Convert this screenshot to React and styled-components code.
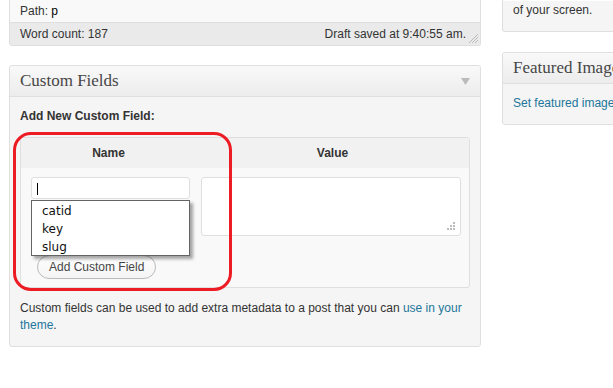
import React from 'react';
import styled, { createGlobalStyle } from 'styled-components';

const GlobalStyle = createGlobalStyle`
  html, body {
    margin: 0;
    padding: 0;
    background: #fff;
    overflow: hidden;
  }
  body {
    font-family: "Liberation Sans", Arial, sans-serif;
    font-size: 12px;
    color: #333;
  }
`;

const Page = styled.div`
  display: flex;
  align-items: flex-start;
  gap: 21px;
  padding-left: 9px;
  width: 900px;
`;

const MainColumn = styled.div`
  width: 472px;
  flex: none;
`;

const SideColumn = styled.div`
  width: 280px;
  flex: none;
`;

const StatusBox = styled.div`
  border: 1px solid #dfdfdf;
  border-top: none;
  border-radius: 0 0 3px 3px;
  background: #f9f9f9;
`;

const StatusRow = styled.div`
  display: flex;
  justify-content: space-between;
  align-items: center;
  height: ${(p) => p.$h}px;
  padding: 0 10px;
  background: ${(p) => p.$bg};
  border-bottom: ${(p) => (p.$divider ? '1px solid #dfdfdf' : 'none')};
  position: relative;
`;

const PathNode = styled.span`
  color: #000;
`;

const Grip = styled.svg`
  position: absolute;
  right: 2px;
  bottom: 2px;
`;

const Postbox = styled.div`
  margin-top: 19px;
  border: 1px solid #dfdfdf;
  border-radius: 3px;
  background: #f5f5f5;
  box-shadow: inset 0 1px 0 #fff;
`;

const TopBox = styled(Postbox)`
  margin-top: 0;
  border-top: none;
  border-radius: 0 0 3px 3px;
  padding: 2px 10px 12px;
  line-height: 17px;
`;

const SideBox = styled(Postbox)`
  margin-top: 20px;
`;

const BoxHeader = styled.h3`
  margin: 0;
  height: 30px;
  padding: 0 10px;
  display: flex;
  align-items: center;
  justify-content: space-between;
  border-bottom: 1px solid #dfdfdf;
  background: linear-gradient(to bottom, #f9f9f9, #ececec);
  border-radius: 3px 3px 0 0;
  font-family: "Liberation Serif", "Times New Roman", serif;
  font-weight: normal;
  font-size: 17px;
  color: #464646;
`;

const BoxBody = styled.div`
  padding: 11px 10px 12px;
  line-height: 17px;
`;

const Label = styled.p`
  margin: 0 0 12px;
  font-weight: bold;
  color: #333;
`;

const TableWrap = styled.div`
  position: relative;
`;

const FieldTable = styled.div`
  display: grid;
  grid-template-columns: 175px 1fr;
  border: 1px solid #dfdfdf;
  border-radius: 3px;
  background: #f9f9f9;
`;

const HeadCell = styled.div`
  height: 30px;
  display: flex;
  align-items: center;
  justify-content: center;
  background: #f1f1f1;
  font-weight: bold;
  color: #333;
`;

const NameCell = styled.div`
  padding: 9px 5px 8px 10px;
`;

const ValueCell = styled.div`
  padding: 9px 8px 0 5px;
`;

const InputWrap = styled.div`
  position: relative;
  width: 159px;
`;

const KeyInput = styled.div`
  box-sizing: border-box;
  height: 22px;
  border: 1px solid #dfdfdf;
  border-radius: 3px;
  background: #fff;
  position: relative;
`;

const Caret = styled.span`
  position: absolute;
  left: 5px;
  top: 5px;
  width: 1px;
  height: 12px;
  background: #000;
`;

const Suggest = styled.ul`
  position: absolute;
  left: 0;
  top: 23px;
  box-sizing: border-box;
  width: 159px;
  height: 56px;
  margin: 0;
  padding: 2px 0 0;
  list-style: none;
  background: #fff;
  border: 1px solid #646464;
  box-shadow: 3px 3px 3px rgba(0, 0, 0, 0.35);
  font-family: "DejaVu Sans", "Noto Sans", sans-serif;
  font-size: 12px;
  color: #111;
  z-index: 2;
`;

const SuggestItem = styled.li`
  height: 18px;
  line-height: 17px;
  padding-left: 10px;
`;

const AddButton = styled.button`
  display: block;
  margin: 56px 0 0 6px;
  height: 24px;
  padding: 0 11px;
  border: 1px solid #bbb;
  border-radius: 12px;
  background: linear-gradient(to bottom, #fefefe, #f4f4f4);
  font-family: "Liberation Sans", Arial, sans-serif;
  font-size: 12px;
  color: #464646;
`;

const ValueArea = styled.div`
  box-sizing: border-box;
  height: 59px;
  border: 1px solid #dfdfdf;
  border-radius: 3px;
  background: #fff;
  position: relative;
`;

const Note = styled.p`
  margin: 12px 0 0;
  line-height: 17px;
`;

const Link = styled.a`
  color: #21759b;
  text-decoration: none;
`;

const Highlight = styled.div`
  position: absolute;
  left: -7px;
  top: -5px;
  width: 219px;
  height: 159px;
  box-sizing: border-box;
  border: 3px solid #ed1c24;
  border-radius: 18px;
  pointer-events: none;
  z-index: 3;
`;

const ToggleArrow = () => (
  <svg width="9" height="7" viewBox="0 0 9 7">
    <polygon points="0,0 9,0 4.5,7" fill="#bbb" />
  </svg>
);

const ResizeDots = () => (
  <Grip width="9" height="9" viewBox="0 0 9 9" style={{ right: 5, bottom: 5 }}>
    {[[7, 1], [4, 4], [7, 4], [1, 7], [4, 7], [7, 7]].map(([x, y]) => (
      <rect key={`${x}-${y}`} x={x} y={y} width="2" height="2" fill="#bbb" />
    ))}
  </Grip>
);

const ResizeLines = () => (
  <Grip width="10" height="10" viewBox="0 0 10 10">
    <line x1="1" y1="10" x2="10" y2="1" stroke="#bbb" />
    <line x1="4" y1="10" x2="10" y2="4" stroke="#bbb" />
    <line x1="7" y1="10" x2="10" y2="7" stroke="#bbb" />
  </Grip>
);

const suggestions = ['catid', 'key', 'slug'];

const App = () => {
  return (
    <>
      <GlobalStyle />
      <Page>
        <MainColumn>
          <StatusBox>
            <StatusRow $h={22} $bg="#f9f9f9" $divider>
              <span>
                Path: <PathNode>p</PathNode>
              </span>
            </StatusRow>
            <StatusRow $h={22} $bg="#eaeaea">
              <span>Word count: 187</span>
              <span style={{ marginRight: 4 }}>Draft saved at 9:40:55 am.</span>
              <ResizeLines />
            </StatusRow>
          </StatusBox>

          <Postbox>
            <BoxHeader>
              <span>Custom Fields</span>
              <ToggleArrow />
            </BoxHeader>
            <BoxBody>
              <Label>Add New Custom Field:</Label>
              <TableWrap>
                <FieldTable>
                  <HeadCell>Name</HeadCell>
                  <HeadCell>Value</HeadCell>
                  <NameCell>
                    <InputWrap>
                      <KeyInput>
                        <Caret />
                      </KeyInput>
                      <Suggest>
                        {suggestions.map((s) => (
                          <SuggestItem key={s}>{s}</SuggestItem>
                        ))}
                      </Suggest>
                    </InputWrap>
                    <AddButton>Add Custom Field</AddButton>
                  </NameCell>
                  <ValueCell>
                    <ValueArea>
                      <ResizeDots />
                    </ValueArea>
                  </ValueCell>
                </FieldTable>
                <Highlight />
              </TableWrap>
              <Note>
                Custom fields can be used to add extra metadata to a post that you can{' '}
                <Link href="#">use in your theme</Link>.
              </Note>
            </BoxBody>
          </Postbox>
        </MainColumn>

        <SideColumn>
          <TopBox>of your screen.</TopBox>
          <SideBox>
            <BoxHeader>
              <span>Featured Image</span>
            </BoxHeader>
            <BoxBody>
              <Link href="#">Set featured image</Link>
            </BoxBody>
          </SideBox>
        </SideColumn>
      </Page>
    </>
  );
};

export default App;
